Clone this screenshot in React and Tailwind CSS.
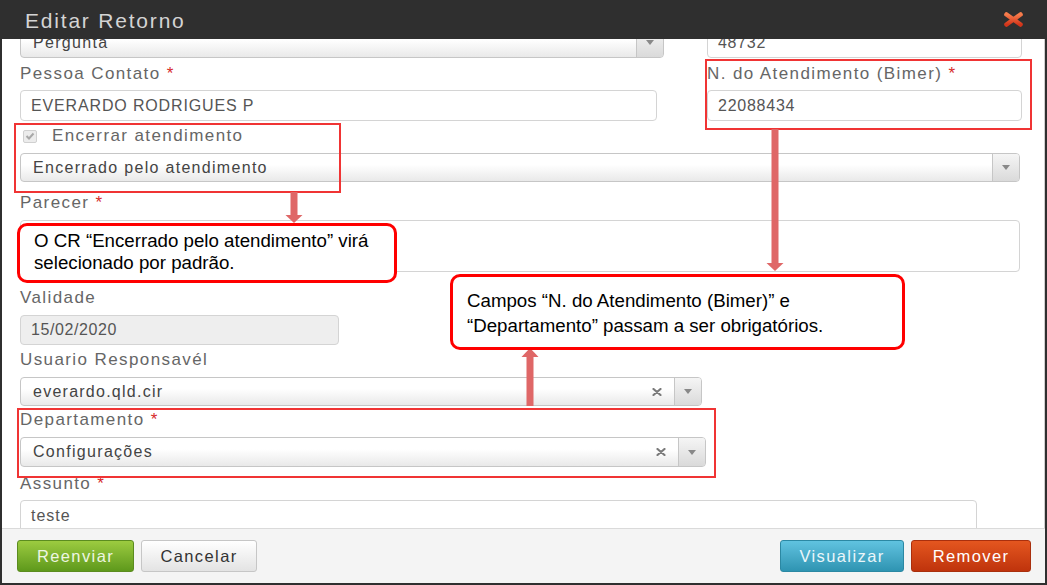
import React from 'react';

const labelCls = 'h-5 leading-5 text-[17px] tracking-[1.4px] text-[#666] whitespace-nowrap';

function Req() {
  return <span className="text-[#d62b2b]"> *</span>;
}

function Label({ children, req, className = '' }) {
  return (
    <div className={`${labelCls} ${className}`}>
      {children}
      {req && <Req />}
    </div>
  );
}

function Input({ text, className = '', track = 'tracking-[1px]', disabled }) {
  return (
    <div
      className={`flex items-center rounded-[4px] border border-[#d4d4d4] pl-[10px] text-[16px] text-[#555] whitespace-nowrap overflow-hidden ${track} ${
        disabled ? 'bg-[#eeeeee]' : 'bg-white'
      } ${className}`}
    >
      {text}
    </div>
  );
}

function Select({ text, className = '', clear, track = 'tracking-[1.3px]' }) {
  return (
    <div
      className={`flex items-stretch rounded-[4px] border border-[#c6c6c6] bg-linear-to-b from-white from-40% to-[#e9e9e9] overflow-hidden ${className}`}
    >
      <div className={`flex-1 flex items-center pl-[12px] text-[16px] text-[#444] whitespace-nowrap ${track}`}>{text}</div>
      {clear && (
        <div className="flex items-center pr-[12px]">
          <svg width="10" height="8" viewBox="0 0 10 8">
            <path d="M1.5 1 L8.5 7 M8.5 1 L1.5 7" stroke="#7a7a7a" strokeWidth="2.2" strokeLinecap="round" />
          </svg>
        </div>
      )}
      <div className="w-[27px] border-l border-[#c6c6c6] bg-linear-to-b from-[#f5f5f5] to-[#dadada] flex items-center justify-center">
        <svg width="8" height="5" viewBox="0 0 8 5">
          <path d="M0 0 H8 L4 5 Z" fill="#888" />
        </svg>
      </div>
    </div>
  );
}

export default function App() {
  return (
    <div className="relative w-[1047px] h-[585px] overflow-hidden bg-[#2f2f2f] px-[2px] pb-[2px] flex flex-col font-['Liberation_Sans',Arial,sans-serif]">
      {/* Header */}
      <div className="h-[39px] shrink-0 flex items-center justify-between pl-[23px] pr-[21px]">
        <span className="text-[21px] tracking-[1.8px] text-[#d4d4d4] pt-[2px]">Editar Retorno</span>
        <svg width="21" height="15" viewBox="0 0 21 15">
          <defs>
            <linearGradient id="xg" x1="0" y1="0" x2="0" y2="1">
              <stop offset="0" stopColor="#f67c4c" />
              <stop offset="1" stopColor="#d3351a" />
            </linearGradient>
          </defs>
          <path d="M3.5 2.5 L17.5 12.5 M17.5 2.5 L3.5 12.5" stroke="url(#xg)" strokeWidth="4.6" strokeLinecap="round" />
        </svg>
      </div>

      {/* Body */}
      <div className="flex-1 bg-white overflow-hidden border-r border-[#cfcfcf] pl-[18px]">
        <div className="-mt-[12px]">
          <div className="flex gap-[43px]">
            <Select text="Pergunta" className="w-[644px] h-[31px]" />
            <Input text="48732" className="w-[315px] h-[31px]" track="tracking-[0.7px]" />
          </div>

          <div className="flex gap-[43px]">
            <div className="w-[644px]">
              <Label req className="mt-[6px] mb-[6px]">Pessoa Contato</Label>
              <Input text="EVERARDO RODRIGUES P" className="w-[637px] h-[31px]" track="tracking-[0.85px]" />
            </div>
            <div className="w-[315px]">
              <Label req className="mt-[6px] mb-[6px]">N. do Atendimento (Bimer)</Label>
              <Input text="22088434" className="w-[315px] h-[31px]" track="tracking-[0.75px]" />
            </div>
          </div>

          <div className="flex items-center h-5 mt-[5px] mb-[7px] pl-[3px] gap-[15px]">
            <div className="w-[14px] h-[13px] rounded-[2px] border border-[#d0d0d0] bg-[#ececec] flex items-center justify-center">
              <svg width="10" height="8" viewBox="0 0 10 8">
                <path d="M1.5 4 L4 6.5 L8.5 1.5" stroke="#a8a8a8" strokeWidth="2" fill="none" />
              </svg>
            </div>
            <span className="text-[17px] tracking-[1.4px] text-[#666]">Encerrar atendimento</span>
          </div>
          <Select text="Encerrado pelo atendimento" className="w-[1000px] h-[29px]" />

          <Label req className="mt-[11px] mb-[7px]">Parecer</Label>
          <Input text="" className="w-[1000px] h-[52px]" />

          <Label className="mt-[16px] mb-[7px]">Validade</Label>
          <Input text="15/02/2020" className="w-[319px] h-[30px]" track="tracking-[0.6px]" disabled />

          <Label className="mt-[5px] mb-[7px]">Usuario Responsavél</Label>
          <Select text="everardo.qld.cir" className="w-[682px] h-[29px]" clear track="tracking-[1.25px]" />

          <Label req className="mt-[4px] mb-[7px]">Departamento</Label>
          <Select text="Configurações" className="w-[686px] h-[30px]" clear track="tracking-[1.3px]" />

          <Label req className="mt-[7px] mb-[6px]">Assunto</Label>
          <Input text="teste" className="w-[957px] h-[32px]" track="tracking-[1px]" />
        </div>
      </div>

      {/* Footer */}
      <div className="h-[55px] shrink-0 bg-[#f4f4f4] border-t border-[#dadada] flex items-center justify-between pl-[15px] pr-[14px]">
        <div className="flex gap-[7px]">
          <button className="w-[117px] h-[32px] rounded-[3px] border border-[#5b8c1f] bg-linear-to-b from-[#9ccb40] to-[#5e991b] text-[16.5px] tracking-[1.4px] text-[#eef6e2]">
            Reenviar
          </button>
          <button className="w-[116px] h-[32px] rounded-[3px] border border-[#c6c6c6] bg-linear-to-b from-white to-[#e3e3e3] text-[16.5px] tracking-[1.4px] text-[#333]">
            Cancelar
          </button>
        </div>
        <div className="flex gap-[7px]">
          <button className="w-[124px] h-[32px] rounded-[3px] border border-[#2b88a3] bg-linear-to-b from-[#60c3e0] to-[#2e94b2] text-[16.5px] tracking-[1.4px] text-[#eaf6fa]">
            Visualizar
          </button>
          <button className="w-[120px] h-[32px] rounded-[3px] border border-[#a92f0d] bg-linear-to-b from-[#e4561f] to-[#bf330c] text-[16.5px] tracking-[1.4px] text-white">
            Remover
          </button>
        </div>
      </div>

      {/* Annotation: highlight boxes */}
      <div className="absolute left-[705px] top-[59px] w-[327px] h-[71px] border-2 border-solid border-[#f03434]" />
      <div className="absolute left-[14px] top-[123px] w-[327px] h-[70px] border-2 border-solid border-[#f03434]" />
      <div className="absolute left-[17px] top-[408px] w-[699px] h-[70px] border-2 border-solid border-[#f03434]" />

      {/* Annotation: arrows */}
      <svg className="absolute left-[285px] top-[192px]" width="18" height="31" viewBox="0 0 18 31">
        <rect x="5.5" y="0" width="7" height="24" fill="#df6767" />
        <path d="M0.5 23 H17.5 L9 31 Z" fill="#df6767" />
      </svg>
      <svg className="absolute left-[766px] top-[129px]" width="18" height="142" viewBox="0 0 18 142">
        <rect x="5.5" y="0" width="7" height="135" fill="#df6767" />
        <path d="M0.5 134 H17.5 L9 142 Z" fill="#df6767" />
      </svg>
      <svg className="absolute left-[521px] top-[348px]" width="18" height="58" viewBox="0 0 18 58">
        <path d="M9 0 L17.5 9 H0.5 Z" fill="#df6767" />
        <rect x="5.5" y="8" width="7" height="50" fill="#df6767" />
      </svg>

      {/* Annotation: callouts */}
      <div className="absolute left-[17px] top-[223px] w-[380px] h-[60px] rounded-[10px] border-[3px] border-[#ff0000] bg-white pl-[14px] pt-[4px] text-[18.7px] leading-[22px] text-black whitespace-nowrap">
        O CR “Encerrado pelo atendimento” virá
        <br />
        selecionado por padrão.
      </div>
      <div className="absolute left-[450px] top-[274px] w-[455px] h-[76px] rounded-[10px] border-[3px] border-[#ff0000] bg-white pl-[14px] pt-[11px] text-[18.7px] leading-[25px] text-black whitespace-nowrap">
        Campos “N. do Atendimento (Bimer)” e
        <br />
        “Departamento” passam a ser obrigatórios.
      </div>
    </div>
  );
}
